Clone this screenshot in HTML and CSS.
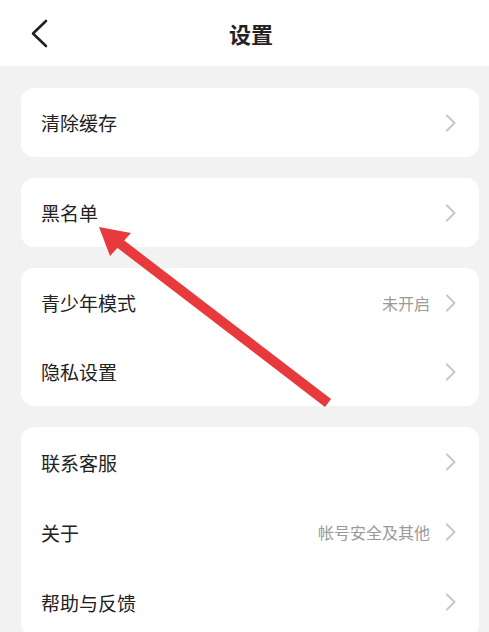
FILE: index.html
```html
<!DOCTYPE html>
<html lang="zh-CN">
<head>
<meta charset="utf-8">
<title>设置</title>
<link rel="stylesheet" href="styles.css">
</head>
<body>
<div class="page">
  <header class="topbar">
    <div class="back">
      <svg width="18" height="30" viewBox="0 0 18 30"><path d="M16 2 L3 14.5 L16 27" fill="none" stroke="#222" stroke-width="2.6" stroke-linecap="round" stroke-linejoin="round"/></svg>
    </div>
    <h1 class="title">设置</h1>
    <div></div>
  </header>
  <main class="content">
    <section class="card">
      <div class="row"><span class="label">清除缓存</span><span class="right"><svg class="chev" width="12" height="18" viewBox="0 0 12 18"><path d="M2 1.5 L9.5 9 L2 16.5" fill="none" stroke="#c6c6c6" stroke-width="2" stroke-linecap="round" stroke-linejoin="round"/></svg></span></div>
    </section>
    <section class="card">
      <div class="row"><span class="label">黑名单</span><span class="right"><svg class="chev" width="12" height="18" viewBox="0 0 12 18"><path d="M2 1.5 L9.5 9 L2 16.5" fill="none" stroke="#c6c6c6" stroke-width="2" stroke-linecap="round" stroke-linejoin="round"/></svg></span></div>
    </section>
    <section class="card">
      <div class="row"><span class="label">青少年模式</span><span class="right"><span class="value">未开启</span><svg class="chev" width="12" height="18" viewBox="0 0 12 18"><path d="M2 1.5 L9.5 9 L2 16.5" fill="none" stroke="#c6c6c6" stroke-width="2" stroke-linecap="round" stroke-linejoin="round"/></svg></span></div>
      <div class="row"><span class="label">隐私设置</span><span class="right"><svg class="chev" width="12" height="18" viewBox="0 0 12 18"><path d="M2 1.5 L9.5 9 L2 16.5" fill="none" stroke="#c6c6c6" stroke-width="2" stroke-linecap="round" stroke-linejoin="round"/></svg></span></div>
    </section>
    <section class="card">
      <div class="row"><span class="label">联系客服</span><span class="right"><svg class="chev" width="12" height="18" viewBox="0 0 12 18"><path d="M2 1.5 L9.5 9 L2 16.5" fill="none" stroke="#c6c6c6" stroke-width="2" stroke-linecap="round" stroke-linejoin="round"/></svg></span></div>
      <div class="row"><span class="label">关于</span><span class="right"><span class="value">帐号安全及其他</span><svg class="chev" width="12" height="18" viewBox="0 0 12 18"><path d="M2 1.5 L9.5 9 L2 16.5" fill="none" stroke="#c6c6c6" stroke-width="2" stroke-linecap="round" stroke-linejoin="round"/></svg></span></div>
      <div class="row"><span class="label">帮助与反馈</span><span class="right"><svg class="chev" width="12" height="18" viewBox="0 0 12 18"><path d="M2 1.5 L9.5 9 L2 16.5" fill="none" stroke="#c6c6c6" stroke-width="2" stroke-linecap="round" stroke-linejoin="round"/></svg></span></div>
    </section>
  </main>
  <svg class="annot" width="489" height="632" viewBox="0 0 489 632">
    <line x1="118" y1="242" x2="328" y2="403" stroke="#e8393c" stroke-width="10"/>
    <polygon points="99,227 131,233 110,256" fill="#e8393c"/>
  </svg>
</div>
</body>
</html>
```

FILE: styles.css
```css
html, body {
  margin: 0;
  padding: 0;
}
body {
  background: #f2f2f2;
  font-family: "Noto Sans CJK SC", "Noto Sans", sans-serif;
  color: #222;
  overflow: hidden;
}
.page {
  position: relative;
  width: 489px;
  height: 632px;
  overflow: hidden;
}
.topbar {
  height: 66px;
  background: #fff;
  display: grid;
  grid-template-columns: 1fr auto 1fr;
  align-items: center;
  padding-left: 13px;
  box-sizing: border-box;
}
.back {
  display: flex;
  align-items: center;
  padding-left: 17px;
  padding-top: 2px;
}
.back svg {
  display: block;
}
.title {
  margin: 0;
  font-size: 22px;
  font-weight: 700;
  color: #222;
  line-height: 1;
}
.content {
  display: flex;
  flex-direction: column;
  gap: 21px;
  padding: 22px 10px 0 21px;
}
.card {
  background: #fff;
  border-radius: 13px;
  display: flex;
  flex-direction: column;
}
.row {
  height: 69px;
  display: flex;
  align-items: center;
  justify-content: space-between;
  padding: 0 22px 0 20px;
}
.card:last-child .row {
  height: 70px;
}
.label {
  font-size: 19px;
  color: #222;
}
.right {
  display: flex;
  align-items: center;
  gap: 15px;
}
.value {
  font-size: 16px;
  color: #9a9a9a;
}
.chev {
  display: block;
}
.annot {
  position: absolute;
  left: 0;
  top: 0;
  pointer-events: none;
}
```
